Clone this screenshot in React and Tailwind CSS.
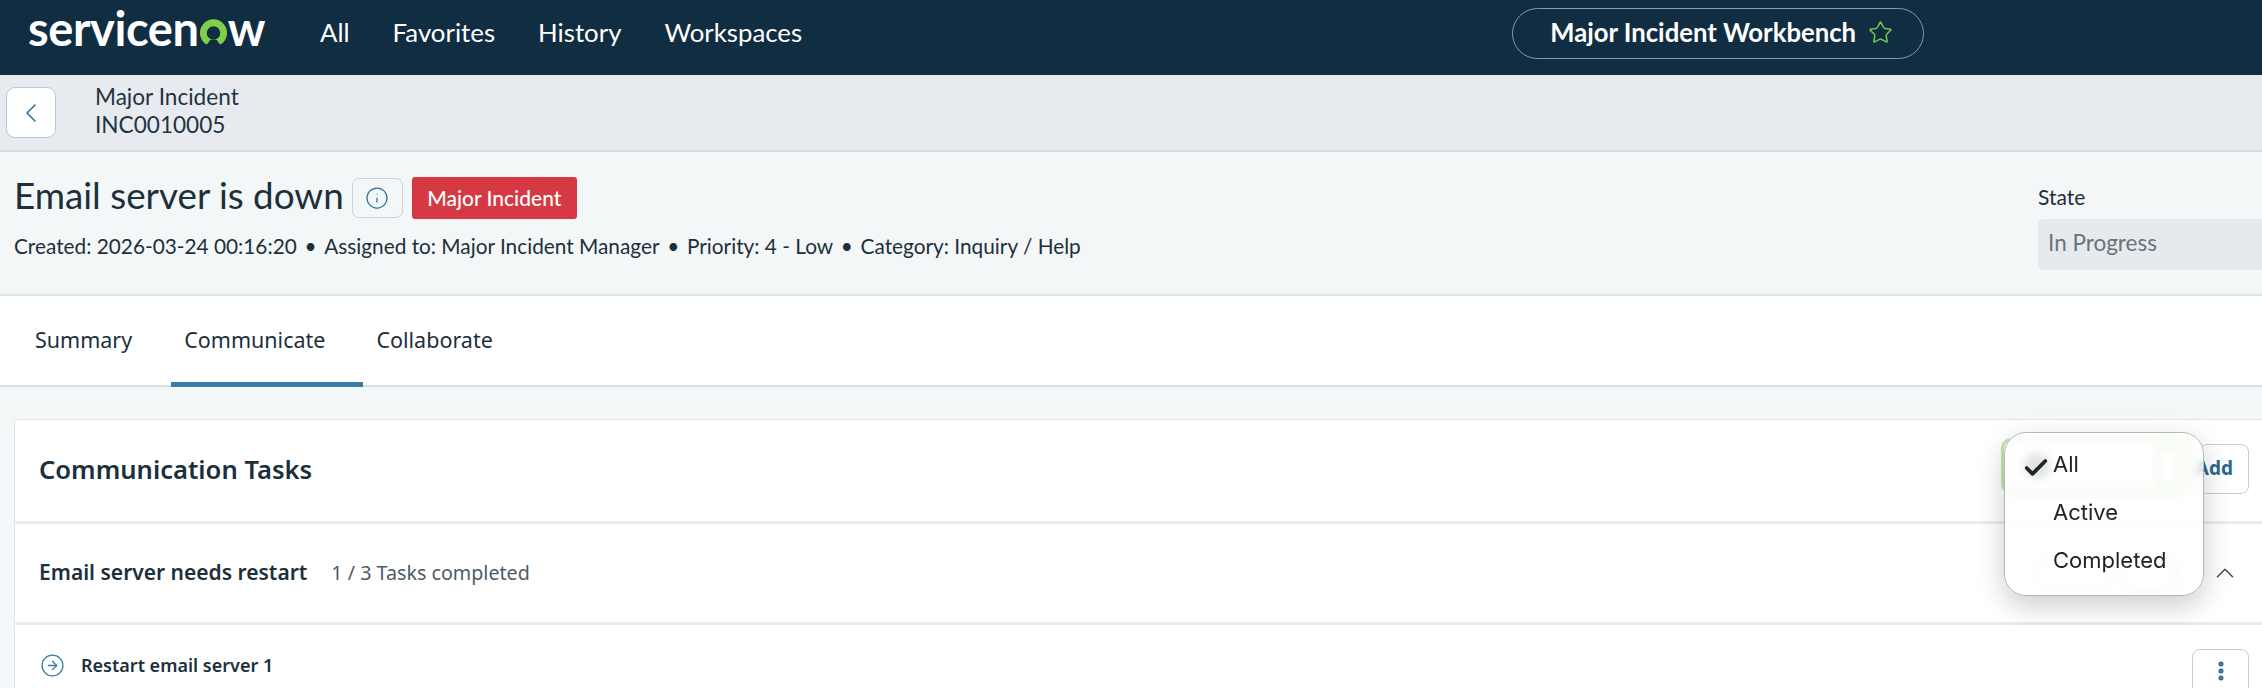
import React from 'react';
import { Check, ChevronLeft, ChevronUp, CircleArrowRight, EllipsisVertical, Info, Star } from 'lucide-react';

const Logo = () => (
    <div className="flex items-center text-white font-['Lato',sans-serif] font-bold text-[47px] leading-none tracking-[-0.4px]">
        <span>servicen</span>
        <svg viewBox="0 0 30 30" className="mt-[7px] h-[29px] w-[29px]">
            <path fillRule="evenodd" d="M8 27.5 A14 14 0 1 1 22 27.5 Q20 25.5 18.7 23 Q15 21.6 11.3 23 Q10 25.5 8 27.5 Z M15 8.5 A7 7 0 1 0 15.01 22.5 A7 7 0 1 0 15 8.5 Z" fill="#7ed04b" />
        </svg>
        <span>w</span>
    </div>
);

const Header = () => (
    <header className="flex h-[75px] shrink-0 items-start bg-[#112d42] pl-[28px] text-white font-['Lato',sans-serif]">
        <div className="mt-[5px]"><Logo /></div>
        <nav className="ml-[55px] mt-[15px] flex gap-[43px] text-[25.8px] leading-[34px]">
            <span>All</span>
            <span>Favorites</span>
            <span>History</span>
            <span>Workspaces</span>
        </nav>
        <button className="ml-[710px] mt-[8px] flex h-[51px] w-[412px] items-center justify-center gap-[12px] rounded-full border border-[#8a99a5] pb-[2px] pl-[7px] text-[25.7px] font-bold">
            Major Incident Workbench
            <Star className="h-[25px] w-[25px] text-[#72c74c]" strokeWidth={1.5} />
        </button>
    </header>
);

const SubBar = () => (
    <div className="flex h-[77px] shrink-0 items-center border-b-2 border-[#d5dbe2] bg-[#e7ebf0] pl-[6px] font-['Lato',sans-serif] text-[#1f3340]">
        <button className="flex h-[51px] w-[50px] items-center justify-center rounded-[9px] border border-[#bcc8d0] bg-white">
            <ChevronLeft className="h-[32px] w-[32px] text-[#2f7296]" strokeWidth={1.25} />
        </button>
        <div className="mb-[4px] ml-[39px] text-[22.6px] leading-[28px]">
            <div>Major Incident</div>
            <div>INC0010005</div>
        </div>
    </div>
);

const TitleBlock = () => (
    <section className="flex h-[144px] shrink-0 justify-between border-b-2 border-[#e0e5e8] bg-[#f4f7f8] pl-[14px] font-['Lato',sans-serif] text-[#1c303c]">
        <div>
            <div className="mt-[25px] flex items-center">
                <h1 className="-mt-[6px] text-[36.8px] leading-[44px]">Email server is down</h1>
                <button className="ml-[8px] flex h-[40px] w-[51px] items-center justify-center rounded-[7px] border border-[#c9d3d9]">
                    <Info className="h-[24px] w-[24px] text-[#2f7296]" strokeWidth={1.25} />
                </button>
                <span className="ml-[9px] flex h-[42px] w-[165px] items-center justify-center rounded-[3px] bg-[#d63943] text-[21px] font-medium text-white">
                    Major Incident
                </span>
            </div>
            <p className="mt-[13px] flex gap-[7.7px] text-[20.8px] leading-[28px]">
                <span>Created: 2026-03-24 00:16:20</span>
                <span>•</span>
                <span>Assigned to: Major Incident Manager</span>
                <span>•</span>
                <span>Priority: 4 - Low</span>
                <span>•</span>
                <span>Category: Inquiry / Help</span>
            </p>
        </div>
        <div className="w-[224px] overflow-visible">
            <div className="mt-[31px] text-[21px] leading-[28px]">State</div>
            <div className="mt-[8px] flex h-[51px] w-[300px] items-center rounded-[5px] bg-[#e5eaee] pb-[3px] pl-[10px] text-[22.5px] text-[#6a7378]">
                In Progress
            </div>
        </div>
    </section>
);

const Tabs = () => (
    <nav className="flex h-[91px] shrink-0 border-b-2 border-[#d9e0e3] bg-white pl-[22px] font-['Noto_Sans',sans-serif] text-[21.5px] text-[#1c303c]">
        <span className="flex h-[89px] items-center pl-[13px] pr-[39px]">Summary</span>
        <span className="flex h-[91px] items-center border-b-[5px] border-[#3a7ea3] pl-[13px] pr-[38px] pt-[3px]">Communicate</span>
        <span className="flex h-[89px] items-center pl-[13px] pr-[38px]">Collaborate</span>
    </nav>
);

const TaskFilter = () => (
    <div className="absolute left-[2004px] top-[432px] z-10 h-[164px] w-[200px] rounded-[22px] border border-[#b5b8b8] bg-white/70 pl-[20px] pt-[7px] font-['Inter',sans-serif] text-[22px] text-[#232323] shadow-[0_10px_28px_rgba(0,0,0,0.2)] backdrop-blur-[4px]">
        <div className="flex h-[48px] items-center">
            <Check className="-ml-[3px] mt-[8px] h-[28px] w-[28px] shrink-0" strokeWidth={3.25} />
            <span className="ml-[3px]">All</span>
        </div>
        <div className="h-[48px] pl-[28px] leading-[48px]">Active</div>
        <div className="h-[48px] pl-[28px] leading-[48px]">Completed</div>
    </div>
);

const Card = () => (
    <section className="ml-[14px] mt-[32px] grow rounded-tl-[5px] border-l border-t border-[#dfe5e8] bg-white font-['Noto_Sans',sans-serif] text-[#1c303c]">
        <div className="flex h-[104px] items-center justify-between border-b-[3px] border-[#e7ecf0] pl-[24px] pr-[13px]">
            <h2 className="-mt-[1px] text-[25.6px] font-semibold">Communication Tasks</h2>
            <div className="mb-[4px] flex items-center gap-[8px]">
                <button className="-mt-[6px] flex h-[56px] w-[190px] items-center justify-between rounded-[10px] border-[3px] border-[#c6e6b2] pl-[20px] pr-[8px] text-[18px]">
                    <span className="h-[26px] w-[26px] rounded-full bg-[#98a3aa]" />
                    <span className="h-[42px] w-[24px] rounded-t-[12px] border-[3px] border-[#b5dd9c]" />
                </button>
                <button className="flex h-[50px] w-[50px] items-center justify-end whitespace-nowrap rounded-[8px] border border-[#c4ced4] bg-white pr-[15px] text-[19px] font-bold text-[#2b6a8c]">
                    Add
                </button>
            </div>
        </div>
        <div className="flex h-[101px] items-center border-b-[3px] border-[#e7ecf0] pl-[24px] pr-[22px]">
            <h3 className="text-[21px] font-semibold">Email server needs restart</h3>
            <span className="ml-[24px] text-[19.7px] text-[#4c5c68]">1 / 3 Tasks completed</span>
            <div className="ml-auto flex items-center gap-[14px]">
                <span className="h-[36px] w-[72px] rounded-[7px] border border-[#c4ced4]" />
                <span className="h-[36px] w-[52px] rounded-[7px] border border-[#9aa8b0]" />
                <ChevronUp className="ml-[20px] h-[30px] w-[30px] text-[#3f4f59]" strokeWidth={1.25} />
            </div>
        </div>
        <div className="flex items-start justify-between pl-[25px] pr-[13px] pt-[24px]">
            <div className="mt-[3px] flex items-center gap-[16px]">
                <CircleArrowRight className="h-[25px] w-[25px] text-[#3a7ea3]" strokeWidth={1.25} />
                <span className="text-[18px] font-semibold">Restart email server 1</span>
            </div>
            <button className="flex h-[50px] w-[57px] items-start justify-center rounded-[8px] border border-[#c4ced4] pt-[9px]">
                <EllipsisVertical className="h-[24px] w-[24px] text-[#2b6a8c]" strokeWidth={3} />
            </button>
        </div>
    </section>
);

const App = () => (
    <div className="relative flex h-screen w-full flex-col overflow-hidden bg-[#f4f7f8]">
        <Header />
        <SubBar />
        <TitleBlock />
        <Tabs />
        <Card />
        <TaskFilter />
    </div>
);

export default App;
